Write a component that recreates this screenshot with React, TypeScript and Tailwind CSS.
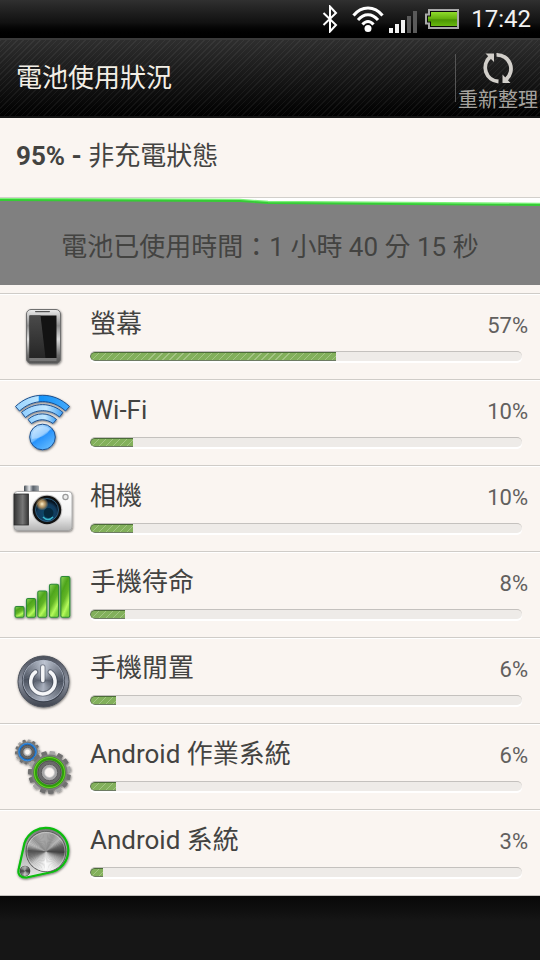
import type { ReactNode } from "react";

const FONT = "font-[Roboto,'Noto_Sans_CJK_TC',sans-serif]";

/** A disc shaded by angle, like brushed metal. */
function BrushedDisc({ cx, cy, r, shades, tint = [0, 0, 0] }: { cx: number; cy: number; r: number; shades: number[]; tint?: number[] }) {
  const count = 72;
  const slices = Array.from({ length: count }, (_, i) => {
    const t = (i / count) * shades.length;
    const k = Math.floor(t);
    const f = t - k;
    const v = shades[k] * (1 - f) + shades[(k + 1) % shades.length] * f;
    const a = (i / count) * Math.PI * 2 - Math.PI / 2;
    const b = ((i + 1.3) / count) * Math.PI * 2 - Math.PI / 2;
    const fill = `rgb(${Math.round(v + tint[0])},${Math.round(v + tint[1])},${Math.round(v + tint[2])})`;
    return (
      <path
        key={i}
        fill={fill}
        d={`M${cx} ${cy}L${cx + r * Math.cos(a)} ${cy + r * Math.sin(a)}L${cx + r * Math.cos(b)} ${cy + r * Math.sin(b)}Z`}
      />
    );
  });
  return <g>{slices}</g>;
}

function IconFrame({ children }: { children: ReactNode }) {
  return (
    <svg className="h-[85px] w-[90px] shrink-0" viewBox="0 0 90 85" aria-hidden="true">
      <defs>
        <filter id="drop" x="-20%" y="-20%" width="150%" height="150%">
          <feDropShadow dx="0.5" dy="1" stdDeviation="0.9" floodColor="#000" floodOpacity="0.55" />
        </filter>
      </defs>
      {children}
    </svg>
  );
}

function PhoneIcon() {
  return (
    <IconFrame>
      <defs>
        <linearGradient id="phoneBody" x1="0" y1="0" x2="0" y2="1">
          <stop offset="0" stopColor="#eeeeee" />
          <stop offset="0.3" stopColor="#8c8c8c" />
          <stop offset="0.55" stopColor="#dedede" />
          <stop offset="0.85" stopColor="#6a6a6a" />
          <stop offset="1" stopColor="#555" />
        </linearGradient>
        <linearGradient id="phoneGlare" x1="0" y1="0" x2="0" y2="1">
          <stop offset="0" stopColor="#4a4a4a" />
          <stop offset="1" stopColor="#262626" />
        </linearGradient>
      </defs>
      <g filter="url(#drop)">
        <rect x="26.5" y="15.5" width="34" height="54" rx="4.5" fill="url(#phoneBody)" stroke="#707070" />
      </g>
      <rect x="35" y="17" width="15" height="1.2" rx="0.6" fill="#555" />
      <rect x="29.5" y="21.5" width="27" height="42.5" fill="#131313" />
      <path d="M29.5 21.5h11l5 42.5h-16z" fill="url(#phoneGlare)" />
      <rect x="29.5" y="64" width="27" height="3" fill="#888" opacity="0.6" />
    </IconFrame>
  );
}

function WifiRowIcon() {
  return (
    <IconFrame>
      <defs>
        <linearGradient id="wifiArc" x1="0" y1="0" x2="1" y2="0">
          <stop offset="0" stopColor="#9ad4ff" />
          <stop offset="0.42" stopColor="#b8e4ff" />
          <stop offset="0.44" stopColor="#1292f8" />
          <stop offset="1" stopColor="#45a9fb" />
        </linearGradient>
        <linearGradient id="wifiMid" x1="0" y1="0" x2="1" y2="0">
          <stop offset="0" stopColor="#8fceff" />
          <stop offset="0.6" stopColor="#c4e8ff" />
          <stop offset="1" stopColor="#3d9ff5" />
        </linearGradient>
        <linearGradient id="wifiDot" x1="0" y1="0" x2="0.7" y2="1">
          <stop offset="0" stopColor="#d8efff" />
          <stop offset="0.5" stopColor="#6fbaff" />
          <stop offset="0.55" stopColor="#2792fb" />
          <stop offset="1" stopColor="#64bbff" />
        </linearGradient>
      </defs>
      <g filter="url(#drop)" stroke="#1c4f8e" strokeWidth="1" strokeLinejoin="round">
        <path d="M15.5 26.5C31 11.5 54 11.5 69.5 26.5L65.5 31C52 18.5 33 18.5 19.5 31Z" fill="url(#wifiArc)" />
        <path d="M21.5 32.5C33.5 22 51.5 22 63 32.5L59.500 37C49.500 28.500 35.500 28.500 25.500 37.500Z" fill="url(#wifiMid)" />
        <path d="M28 39.500C36 32 48.500 32 56.500 39.500L53 43.500C46 38.500 38.500 38.500 31.500 43.500Z" fill="url(#wifiMid)" />
        <circle cx="42.5" cy="57" r="12.800" fill="url(#wifiDot)" />
      </g>
      <path d="M32 59a11 11 0 0 1 18-10q-3 8-18 10" fill="#fff" opacity="0.3" />
    </IconFrame>
  );
}

function CameraIcon() {
  return (
    <IconFrame>
      <defs>
        <linearGradient id="camBody" x1="0" y1="0" x2="0" y2="1">
          <stop offset="0" stopColor="#fff" />
          <stop offset="0.6" stopColor="#f2f2f2" />
          <stop offset="1" stopColor="#b4b4b4" />
        </linearGradient>
        <linearGradient id="camGrip" x1="0" y1="0" x2="1" y2="0">
          <stop offset="0" stopColor="#333" />
          <stop offset="0.6" stopColor="#777" />
          <stop offset="1" stopColor="#333" />
        </linearGradient>
        <linearGradient id="camKnob" x1="0" y1="0" x2="1" y2="0">
          <stop offset="0" stopColor="#40484f" />
          <stop offset="0.35" stopColor="#e8eaed" />
          <stop offset="0.6" stopColor="#59616a" />
          <stop offset="1" stopColor="#a5abb0" />
        </linearGradient>
        <radialGradient id="camLens" cx="0.5" cy="0.65" r="0.55">
          <stop offset="0" stopColor="#18aac0" />
          <stop offset="0.35" stopColor="#0e4467" />
          <stop offset="0.75" stopColor="#123a5c" />
          <stop offset="1" stopColor="#051320" />
        </radialGradient>
        <radialGradient id="camFlare">
          <stop offset="0" stopColor="#fff4cf" />
          <stop offset="0.5" stopColor="#d7a763" stopOpacity="0.8" />
          <stop offset="1" stopColor="#d7a763" stopOpacity="0" />
        </radialGradient>
      </defs>
      <rect x="24" y="19.5" width="15" height="7" rx="1" fill="url(#camKnob)" />
      <g filter="url(#drop)">
        <rect x="14" y="25.5" width="58" height="39" rx="3.5" fill="url(#camBody)" stroke="#a0a0a0" strokeWidth="0.8" />
      </g>
      <rect x="14" y="28" width="14.5" height="31" fill="url(#camGrip)" stroke="#2d2d2d" strokeWidth="0.8" />
      <circle cx="47" cy="44" r="15.3" fill="#c2c2c2" />
      <circle cx="47" cy="44" r="14.2" fill="#111" />
      <circle cx="47" cy="44" r="11.5" fill="url(#camLens)" stroke="#397094" strokeWidth="0.8" />
      <circle cx="48.5" cy="47" r="5" fill="#06283c" />
      <path d="M43 51q5 5 10 0" stroke="#39b9cc" strokeWidth="1.5" fill="none" />
      <circle cx="42" cy="38" r="6.5" fill="url(#camFlare)" />
      <circle cx="65.5" cy="31" r="2.6" fill="#eee" stroke="#999" strokeWidth="1.2" />
    </IconFrame>
  );
}

function SignalBarsIcon() {
  const bars = [
    { x: 15, y: 54.5 },
    { x: 26.5, y: 46.5 },
    { x: 37.8, y: 39 },
    { x: 49.5, y: 32.2 },
    { x: 60.8, y: 24.5 },
  ];
  return (
    <IconFrame>
      <defs>
        <linearGradient id="greenBar" x1="0" y1="0" x2="0.5" y2="1">
          <stop offset="0" stopColor="#8fd55a" />
          <stop offset="0.35" stopColor="#4ea51d" />
          <stop offset="0.6" stopColor="#62b526" />
          <stop offset="0.85" stopColor="#b5fa5b" />
          <stop offset="1" stopColor="#86d93f" />
        </linearGradient>
      </defs>
      <g filter="url(#drop)">
        {bars.map((b) => (
          <rect key={b.x} x={b.x} y={b.y} width="9" height={65.3 - b.y} rx="1.5" fill="url(#greenBar)" stroke="#2f8a38" strokeWidth="1.1" />
        ))}
      </g>
    </IconFrame>
  );
}

function PowerIcon() {
  return (
    <IconFrame>
      <defs>
        <linearGradient id="powerRim" x1="0" y1="0" x2="0" y2="1">
          <stop offset="0" stopColor="#4a4f5b" />
          <stop offset="0.5" stopColor="#8a909d" />
          <stop offset="1" stopColor="#3f444f" />
        </linearGradient>
      </defs>
      <g filter="url(#drop)">
        <circle cx="43.5" cy="43.5" r="25.5" fill="url(#powerRim)" stroke="#4b505a" strokeWidth="1" />
      </g>
      <circle cx="43.5" cy="43" r="21.5" fill="#383e4a" />
      <circle cx="43.5" cy="42.5" r="20.8" fill="#a9b1c0" />
      <BrushedDisc cx={43.5} cy={42.5} r={20} shades={[195, 135, 80, 125, 175, 130, 80, 135]} tint={[-4, 3, 16]} />
      <g stroke="#333a48" strokeWidth="5.500" fill="none" strokeLinecap="round" opacity="0.45">
        <path d="M42.8 29v13.5M35.5 34a12.200 12.200 0 1 0 14.800 0" />
      </g>
      <g stroke="#f5f6f8" strokeWidth="3.5" fill="none" strokeLinecap="round">
        <path d="M42.8 29v13.5M35.500 34a12.200 12.200 0 1 0 14.800 0" />
      </g>
    </IconFrame>
  );
}

function Gear({ cx, cy, r, teeth, ring, ringLight }: { cx: number; cy: number; r: number; teeth: number; ring: string; ringLight: string }) {
  const w = r * 0.26;
  return (
    <g>
      {Array.from({ length: teeth }, (_, i) => (
        <rect
          key={i}
          x={cx - w / 2}
          y={cy - r}
          width={w}
          height={r * 0.35}
          rx={0.8}
          fill={i % 3 === 0 ? "#a5a5a5" : "#707070"}
          transform={`rotate(${(i * 360) / teeth + 8} ${cx} ${cy})`}
        />
      ))}
      <circle cx={cx} cy={cy} r={r * 0.84} fill="#7b7b7b" />
      <circle cx={cx} cy={cy} r={r * 0.66} fill="#858585" stroke={ring} strokeWidth={r * 0.17} />
      <circle cx={cx} cy={cy} r={r * 0.7} fill="none" stroke={ringLight} strokeWidth={r * 0.05} />
      <circle cx={cx} cy={cy} r={r * 0.54} fill="#6b6b6b" stroke="#3c3c3c" strokeWidth={0.6} />
      <circle cx={cx} cy={cy} r={r * 0.38} fill="#a8a8a8" stroke="#555" strokeWidth={0.8} />
      <circle cx={cx} cy={cy} r={r * 0.23} fill="#faf5f1" stroke="#c9c9c9" strokeWidth={0.8} />
    </g>
  );
}

function GearsIcon() {
  return (
    <IconFrame>
      <g filter="url(#drop)">
        <Gear cx={27.5} cy={28} r={12.5} teeth={14} ring="#1769c0" ringLight="#57a9f0" />
        <Gear cx={49.5} cy={48.5} r={21.5} teeth={15} ring="#2d9c08" ringLight="#66cf28" />
      </g>
    </IconFrame>
  );
}

function DialIcon() {
  return (
    <IconFrame>
      <defs>
        <linearGradient id="dialPlate" x1="0" y1="0" x2="0" y2="1">
          <stop offset="0" stopColor="#777" />
          <stop offset="0.6" stopColor="#bbb" />
          <stop offset="1" stopColor="#e8e8e8" />
        </linearGradient>
      </defs>
      <g filter="url(#drop)">
        <path
          d="M24.500 33A22.500 22.500 0 1 1 49.500 62.500L26.500 67.500Q17.500 67.500 18.500 60Z"
          fill="url(#dialPlate)"
          stroke="#08bc0d"
          strokeWidth="2.2"
        />
      </g>
      <circle cx="46" cy="41.5" r="20.5" fill="#555" />
      <BrushedDisc cx={46} cy={41.5} r={19.7} shades={[165, 150, 185, 100, 65, 150, 205, 240, 250, 225, 200, 120, 80, 190, 150, 170]} />
      <circle cx="46" cy="41.5" r="19" fill="none" stroke="#eee" strokeWidth="0.6" opacity="0.7" />
      <circle cx="25" cy="61" r="5.3" fill="#444" />
      <BrushedDisc cx={25} cy={61} r={4.7} shades={[210, 120, 60, 160, 240, 140, 70, 160]} />
    </IconFrame>
  );
}

const usage = [
  { name: "螢幕", percent: 57, icon: <PhoneIcon /> },
  { name: "Wi-Fi", percent: 10, icon: <WifiRowIcon /> },
  { name: "相機", percent: 10, icon: <CameraIcon /> },
  { name: "手機待命", percent: 8, icon: <SignalBarsIcon /> },
  { name: "手機閒置", percent: 6, icon: <PowerIcon /> },
  { name: "Android 作業系統", percent: 6, icon: <GearsIcon /> },
  { name: "Android 系統", percent: 3, icon: <DialIcon /> },
];

function StatusBar() {
  return (
    <div className="flex h-[38px] items-center justify-end bg-linear-to-b from-[#303030] via-[#111] via-60% to-black pr-[9px]">
      <svg className="mr-[14px] h-7 w-4" viewBox="0 0 16 28" fill="none" stroke="#fff" strokeWidth="2" aria-label="Bluetooth">
        <path d="M1.500 8L14 20L8 26.500V1.500L14 8L1.500 20" />
      </svg>
      <svg className="mr-[5px] h-7 w-8" viewBox="0 0 32 28" fill="none" stroke="#fff" strokeWidth="3" aria-label="Wi-Fi">
        <path d="M1.500 10.500C9.500 .500 22.500 .500 30.500 10.500M6 15c6-7 14-7 20 0M10.500 19.500c3.500-4 7.500-4 11 0" />
        <circle cx="16" cy="23.500" r="3.500" fill="#fff" stroke="none" />
      </svg>
      <svg className="mr-2 h-7 w-7" viewBox="0 0 28 28" aria-label="Signal">
        <path d="M0 23h4v5H0zM6 19h4v9H6zM12 15h4v13h-4z" fill="#f2f2f2" />
        <path d="M18 11h4v17h-4zM24 6h4v22h-4z" fill="#5a5a5a" />
      </svg>
      <svg className="mr-3 h-5 w-[34px]" viewBox="0 0 34 20" aria-label="Battery">
        <defs>
          <linearGradient id="battery" x1="0" y1="0" x2="0" y2="1">
            <stop offset="0" stopColor="#8fdc2c" />
            <stop offset="0.5" stopColor="#62ae0c" />
            <stop offset="0.55" stopColor="#4b9403" />
            <stop offset="1" stopColor="#67b80f" />
          </linearGradient>
        </defs>
        <path d="M4 1h29v18H4v-4.500H1v-9h3z" fill="#0a0a0a" stroke="#a9a9a9" strokeWidth="2" />
        <path d="M6 3h26v14H6v-4.500H3v-5h3z" fill="url(#battery)" />
      </svg>
      <time className="text-2xl leading-7 text-[#f2f2f2]">17:42</time>
    </div>
  );
}

function RefreshIcon() {
  return (
    <svg className="h-[34px] w-9" viewBox="0 0 36 34" fill="none" aria-hidden="true">
      <g stroke="#d2cfca" strokeWidth="3.800">
        <path d="M18.500 29.500A14 14 0 0 1 10 5" />
        <path d="M16.500 2.800A14 14 0 0 1 26 27.500" />
      </g>
      <path d="M5.500 1.500H14V10z" fill="#d2cfca" />
      <path d="M30.500 31H22.500V22.500z" fill="#d2cfca" />
    </svg>
  );
}

export default function App() {
  return (
    <div className={`flex min-h-screen flex-col bg-[#161616] text-[#434341] ${FONT}`}>
      <StatusBar />
      <header className="flex h-20 items-center justify-between border-t-2 border-b-2 border-t-[#3a3a3a] border-b-[#141414] bg-[repeating-linear-gradient(135deg,rgba(255,255,255,0.05)_0px,rgba(255,255,255,0.05)_1px,transparent_1px,transparent_4px),linear-gradient(to_bottom,#2e2e2e,#000)] pl-4">
        <h1 className="text-[26px] leading-8 text-[#f3efe6]">電池使用狀況</h1>
        <div className="flex items-center">
          <div className="h-12 w-px bg-[#555]" />
          <button type="button" className="flex flex-col items-center px-[2px] pt-[10px] text-xl leading-7 text-[#a5a29e]">
            <RefreshIcon />
            重新整理
          </button>
        </div>
      </header>

      <main className="bg-[#faf5f1]">
        <h2 className="flex h-[79px] items-center px-4 pb-1 text-[26px] leading-8">
          <span className="whitespace-pre font-bold">95% - </span>
          <span>非充電狀態</span>
        </h2>
        <section className="grid h-24 border-t border-[#d2cfcb] pb-2">
          <svg className="col-start-1 row-start-1 h-[87px] w-full" viewBox="0 0 540 87" preserveAspectRatio="none" aria-hidden="true">
            <path d="M0 0H540V8H0z" fill="#fff" />
            <path d="M0 2L240 3L265 5L540 7V87H0z" fill="#808080" />
            <path d="M0 1L240 2L268 4L540 6" fill="none" stroke="#7df27a" strokeWidth="2.500" />
            <path d="M0 2L240 3L268 5L540 7" fill="none" stroke="#36cc36" strokeWidth="1.800" />
          </svg>
          <p className="col-start-1 row-start-1 self-center pt-[10px] text-center text-[26px] leading-8">
            電池已使用時間：1 小時 40 分 15 秒
          </p>
        </section>

        <ul>
          {usage.map((item) => (
            <li
              key={item.name}
              className="flex h-[86px] border-t border-[#cfccc8] shadow-[inset_0_1px_0_#fff]"
            >
              {item.icon}
              <div className="min-w-0 flex-1">
                <div className="flex h-[57px] items-baseline justify-between pt-3 pr-3">
                  <span className="text-[26px] leading-9">{item.name}</span>
                  <span className="text-[22px] text-[#62605e]">{item.percent}%</span>
                </div>
                <div
                  role="progressbar"
                  aria-label={item.name}
                  aria-valuenow={item.percent}
                  aria-valuemin={0}
                  aria-valuemax={100}
                  className="mr-[18px] h-[10px] overflow-hidden rounded-full border-t border-[#c4c1be] bg-[#eeebe8] shadow-[0_2px_0_#fff]"
                >
                  <div
                    className="h-full rounded-l-full border-t border-b border-l border-t-[#4b6b38] border-b-[#6d7b63] border-l-[#5c6f50] bg-[repeating-linear-gradient(135deg,#a3c583_0px,#a3c583_1px,#82b05b_1px,#82b05b_5px)]"
                    style={{ width: `${item.percent}%` }}
                  />
                </div>
              </div>
            </li>
          ))}
        </ul>
      </main>

      <div className="flex-1 border-t border-[#c4c1be] bg-linear-to-b from-[#080808] to-[#161616] to-40%" />
    </div>
  );
}
